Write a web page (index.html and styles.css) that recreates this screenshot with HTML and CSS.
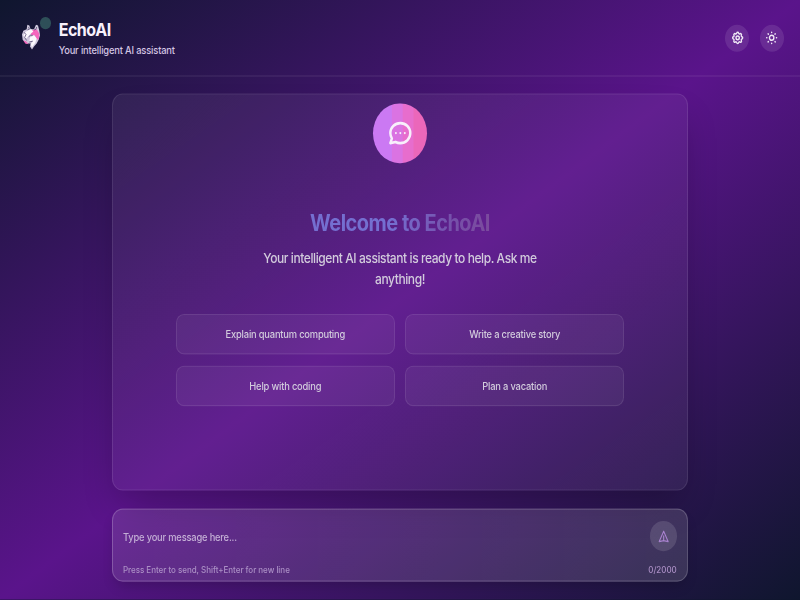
FILE: index.html
```html
<!DOCTYPE html>
<html lang="en">
<head>
<meta charset="utf-8">
<title>EchoAI</title>
<link rel="stylesheet" href="styles.css">
</head>
<body>
<div class="app">
  <header class="header">
    <div class="brand">
      <div class="logo">
        <svg viewBox="0 0 48 48" width="48" height="48">
          <path fill="#cfc8dd" d="M17 6 20 7 22 12 27 12 30 6 33 7 35 14 36 20 34 26 31 31 27 35 24 39 21 35 22 31 15 31 10 26 9 19 11 14 16 12Z"/>
          <path fill="#f565bd" d="M25 13 31 12 35 18 34 26 31 25 28 20 23 20 22 16Z M11 27 15 28 19 32 14 31Z"/>
          <path fill="#fbf9fd" d="M18 13 23 12 26 15 22 18 18 22 14 25 11 20 14 16Z M21 23 27 20 31 24 29 30 24 36 22 32 26 27 20 28Z"/>
          <path fill="none" stroke="#554b72" stroke-width="1.1" d="M19 9 20 12 17 13M31 9 30 12 27 13M12 16 15 19 13 23 16 27M19 22 22 20 25 20M20 29 25 28"/>
        </svg>
        <span class="status"></span>
      </div>
      <div>
        <h1 class="brand-name">EchoAI</h1>
        <p class="brand-sub">Your intelligent AI assistant</p>
      </div>
    </div>
    <div class="actions">
      <button class="icon-btn" aria-label="Settings">
        <svg viewBox="0 0 24 24" width="20" height="20" fill="none" stroke="currentColor" stroke-width="2.400" stroke-linejoin="round"><path d="M10.3 4.3c.4-1.8 3-1.8 3.4 0a1.7 1.7 0 0 0 2.6 1.1c1.5-.9 3.3.8 2.4 2.4a1.7 1.7 0 0 0 1 2.5c1.8.4 1.8 3 0 3.4a1.7 1.7 0 0 0-1 2.6c.9 1.5-.9 3.3-2.4 2.4a1.7 1.7 0 0 0-2.6 1c-.4 1.8-3 1.8-3.4 0a1.7 1.7 0 0 0-2.6-1c-1.5.9-3.3-.9-2.4-2.4a1.7 1.7 0 0 0-1-2.6c-1.8-.4-1.8-3 0-3.4a1.7 1.7 0 0 0 1-2.5c-.9-1.6.9-3.3 2.4-2.4a1.7 1.7 0 0 0 2.6-1.1Z"/><circle cx="12" cy="12" r="3"/></svg>
      </button>
      <button class="icon-btn" aria-label="Theme">
        <svg viewBox="0 0 24 24" width="20" height="20" fill="none" stroke="currentColor" stroke-width="2.400" stroke-linecap="round"><circle cx="12" cy="12" r="4"/><path d="M12 3v.5M12 20.500v.5M3 12h.5M20.500 12h.5M5.600 5.600l.4.4M18 18l.4.4M18.400 5.600l-.4.4M6 18l-.4.4"/></svg>
      </button>
    </div>
  </header>
  <main class="main">
    <section class="chat">
      <div class="bubble">
        <svg viewBox="0 0 24 24" width="40" height="40" fill="none" stroke="currentColor" stroke-width="2.200" stroke-linecap="round" stroke-linejoin="round"><path stroke-width="1.800" d="M8 12h.01M12 12h.01M16 12h.01"/><path d="M21 12c0 4.400-4 8-9 8a9.900 9.900 0 0 1-4.300-.9L3 20l1.400-3.700C3.500 15 3 13.600 3 12c0-4.400 4-8 9-8s9 3.600 9 8Z"/></svg>
      </div>
      <h2 class="title">Welcome to EchoAI</h2>
      <p class="lead">Your intelligent AI assistant is ready to help. Ask me anything!</p>
      <div class="prompts">
        <button class="prompt">Explain quantum computing</button>
        <button class="prompt">Write a creative story</button>
        <button class="prompt">Help with coding</button>
        <button class="prompt">Plan a vacation</button>
      </div>
    </section>
    <section class="composer">
      <div class="composer-row">
        <span class="placeholder">Type your message here...</span>
        <button class="send" aria-label="Send">
          <svg viewBox="0 0 24 24" width="20" height="20" fill="none" stroke="currentColor" stroke-width="2" stroke-linejoin="round"><path d="m12 19 8 1.500-8-16.500-8 16.500 8-1.500Zm0 0v-8"/></svg>
        </button>
      </div>
      <div class="composer-foot"><span>Press Enter to send, Shift+Enter for new line</span><span>0/2000</span></div>
    </section>
  </main>
</div>
</body>
</html>
```
FILE: styles.css
```css
* { box-sizing: border-box; margin: 0; padding: 0; }
html, body { width: 800px; height: 600px; overflow: hidden; background: #0f172b; }
body { font-family: Inter, "Liberation Sans", sans-serif; }
button { font: inherit; border: 0; color: inherit; }
svg { display: block; }

/* A 1200x800 canvas fitted to the window. */
.app {
  width: 1200px;
  height: 800px;
  display: flex;
  flex-direction: column;
  zoom: 0.666667;
  transform: scaleY(1.125);
  transform-origin: 0 0;
  background: linear-gradient(to bottom right, #0f162e, #5a148b, #0f162e);
  color: #fff;
}

.header {
  height: 102px;
  flex: none;
  display: flex;
  align-items: center;
  justify-content: space-between;
  padding: 0 24px;
  border-bottom: 1.5px solid rgba(255, 255, 255, 0.11);
}
.brand { display: flex; align-items: center; gap: 16px; }
.logo { position: relative; width: 48px; height: 48px; }
.status {
  position: absolute;
  top: -4px;
  right: -4px;
  width: 16px;
  height: 16px;
  border-radius: 50%;
  background: #2e4f58;
}
.brand-name { font-size: 24px; line-height: 32px; font-weight: 700; letter-spacing: -0.7px; color: #f8f1fc; }
.brand-sub { font-size: 14px; line-height: 20px; font-weight: 500; letter-spacing: -0.24px; color: #d3c4e2; }
.actions { display: flex; gap: 16px; }
.icon-btn {
  width: 36px;
  height: 36px;
  border-radius: 50%;
  display: grid;
  place-items: center;
  background: rgba(255, 255, 255, 0.1);
  color: #f0e8f6;
}

.main { flex: 1; width: 864px; margin: 0 auto; padding: 23px 0 24px; display: flex; flex-direction: column; gap: 24px; }
.chat {
  flex: 1;
  border: 1.5px solid rgba(255, 255, 255, 0.09);
  border-radius: 16px;
  background: linear-gradient(to bottom right, rgba(255, 255, 255, 0.06), rgba(255, 255, 255, 0.05) 50%, rgba(255, 255, 255, 0.06));
  box-shadow: 0 25px 50px -12px rgba(0, 0, 0, 0.25);
  padding-top: 11.5px;
  display: flex;
  flex-direction: column;
  align-items: center;
}
.bubble {
  width: 80px;
  height: 80px;
  border-radius: 50%;
  display: grid;
  place-items: center;
  background: linear-gradient(to right, #cb79f3 34%, #da73e2 36%, #da73e2 54%, #e76dcd 56%, #e76dcd 74%, #eb67ba 76%);
  color: #f8effb;
}
.title {
  margin-top: 61px;
  font-size: 30px;
  line-height: 36px;
  font-weight: 700;
  letter-spacing: -0.77px;
  background: linear-gradient(to right, #746fd0 45%, #7650a9 80%, #7b4a9d);
  -webkit-background-clip: text;
  background-clip: text;
  color: transparent;
}
.lead { width: 448px; margin-top: 16px; font-size: 18px; line-height: 28px; font-weight: 500; letter-spacing: -0.62px; text-align: center; color: #d2cbdc; }
.prompts { width: 672px; margin-top: 31px; display: grid; grid-template-columns: 1fr 1fr; gap: 16px; }
.prompt {
  height: 54px;
  border: 1.5px solid rgba(255, 255, 255, 0.09);
  border-radius: 12px;
  background: rgba(255, 255, 255, 0.05);
  font-size: 14px;
  font-weight: 500;
  letter-spacing: -0.28px;
  color: #d2cbdc;
}

.composer {
  height: 98px;
  border: 1.5px solid rgba(255, 255, 255, 0.18);
  border-radius: 16px;
  background: linear-gradient(to right, rgba(255, 255, 255, 0.1), rgba(255, 255, 255, 0.13));
  box-shadow: 0 10px 20px -6px rgba(0, 0, 0, 0.2);
  padding: 15px 15.5px 7px 15px;
  display: flex;
  flex-direction: column;
  justify-content: space-between;
}
.composer-row { display: flex; justify-content: space-between; align-items: center; }
.placeholder { font-size: 14px; padding-top: 5px; font-weight: 500; letter-spacing: -0.28px; color: #c3aed5; }
.send {
  width: 40px;
  height: 40px;
  border-radius: 50%;
  display: grid;
  place-items: center;
  background: rgba(255, 255, 255, 0.12);
  color: #a781cd;
}
.composer-foot { display: flex; justify-content: space-between; font-size: 12px; line-height: 16px; font-weight: 500; letter-spacing: -0.04px; color: #ab8fc5; }
```
